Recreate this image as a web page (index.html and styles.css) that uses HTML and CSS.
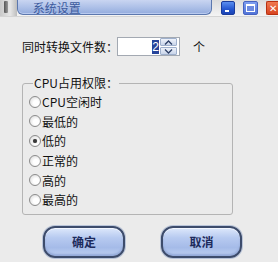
FILE: index.html
```html
<!DOCTYPE html>
<html lang="zh">
<head>
<meta charset="utf-8">
<title>系统设置</title>
<link rel="stylesheet" href="styles.css">
</head>
<body>
<div class="window">
  <div class="titlebar">
    <div class="sysicon"><span class="sysbar"></span></div>
    <div class="titlepill"><span class="title">系统设置</span></div>
    <div class="winbtns">
      <span class="wbtn min"><span class="min-bar"></span></span>
      <span class="wbtn max"><span class="max-box"></span></span>
      <span class="wbtn close">✕</span>
    </div>
  </div>
  <div class="content">
    <div class="row-count">
      <label class="count-label">同时转换文件数：</label>
      <div class="spin">
        <span class="spin-val"><span class="sel">2</span></span>
        <span class="spin-btns">
          <span class="sbtn"><svg width="9" height="5" viewBox="0 0 9 5"><path d="M1 4.5 L4.5 1 L8 4.5" fill="none" stroke="#2d3f66" stroke-width="1.3"/></svg></span>
          <span class="sbtn"><svg width="9" height="5" viewBox="0 0 9 5"><path d="M1 0.5 L4.5 4 L8 0.5" fill="none" stroke="#2d3f66" stroke-width="1.3"/></svg></span>
        </span>
      </div>
      <span class="unit">个</span>
    </div>
    <fieldset class="group">
      <legend>CPU占用权限：</legend>
      <label class="radio"><span class="dot"></span><span>CPU空闲时</span></label>
      <label class="radio"><span class="dot"></span><span>最低的</span></label>
      <label class="radio"><span class="dot checked"></span><span>低的</span></label>
      <label class="radio"><span class="dot"></span><span>正常的</span></label>
      <label class="radio"><span class="dot"></span><span>高的</span></label>
      <label class="radio"><span class="dot"></span><span>最高的</span></label>
    </fieldset>
    <div class="buttons">
      <button class="pill ok">确定</button>
      <button class="pill cancel">取消</button>
    </div>
  </div>
</div>
</body>
</html>
```

FILE: styles.css
```css
* { box-sizing: border-box; }
html, body { margin: 0; padding: 0; }
body {
  width: 278px;
  height: 262px;
  overflow: hidden;
  background: #ebebeb;
  font-family: "Noto Sans CJK SC", "Noto Sans", sans-serif;
  font-size: 12px;
  color: #111;
}
.window { width: 278px; height: 262px; }

.titlebar {
  height: 17px;
  display: flex;
  align-items: flex-start;
  background: linear-gradient(#dcdcdc, #f4f4f4);
  border-bottom: 1px solid #d4d4d4;
}
.sysicon {
  width: 17px;
  height: 16px;
  display: flex;
  justify-content: center;
  background: linear-gradient(90deg, #c8c8c8, #e6e6e6 60%, #bdbdbd);
}
.sysbar {
  width: 4px;
  height: 12px;
  margin-top: 1px;
  margin-right: 5px;
  background: linear-gradient(90deg, #555, #999);
  border-radius: 1px;
}
.titlepill {
  width: 198px;
  height: 15px;
  border: 1px solid #5c78ae;
  border-top: none;
  border-radius: 0 0 6px 6px;
  background: linear-gradient(#c9d5f1, #a9bde6 60%, #93abdd);
  box-shadow: inset 0 -1px 0 #b9caef;
  overflow: hidden;
}
.title {
  display: block;
  padding-left: 15px;
  padding-top: 1px;
  line-height: 13px;
  font-size: 12px;
  color: #3d5b9e;
}
.winbtns {
  display: flex;
  gap: 8px;
  margin-left: 9px;
  margin-top: 1px;
}
.wbtn {
  width: 14px;
  height: 14px;
  border-radius: 2px;
  position: relative;
}
.min {
  background: linear-gradient(#5a8ef0, #2456d0 60%, #1c44b4);
  border: 1px solid #1a3c9c;
}
.min-bar {
  position: absolute;
  left: 3px;
  bottom: 2px;
  width: 4px;
  height: 2px;
  background: #fff;
}
.max {
  width: 15px;
  background: linear-gradient(#7e9ef0, #5274d8);
  border: 1px solid #4662c0;
}
.max-box {
  position: absolute;
  left: 2px;
  top: 2px;
  width: 9px;
  height: 8px;
  border: 1px solid #fff;
  border-top-width: 2px;
  background: #6d8ae0;
}
.close {
  width: 12px;
  background: linear-gradient(#f07a50, #d84420);
  border: 1px solid #b83010;
  border-right: none;
  border-radius: 2px 0 0 2px;
  color: #fff;
  font-size: 10px;
  line-height: 12px;
  padding-left: 2px;
  overflow: hidden;
}

.content { padding-left: 22px; }

.row-count {
  display: flex;
  align-items: center;
  height: 19px;
  margin-top: 20px;
}
.count-label {
  width: 95px;
  white-space: nowrap;
  line-height: 19px;
}
.spin {
  width: 63px;
  height: 19px;
  border: 1px solid #a3a9b2;
  background: #fff;
  display: flex;
  align-items: center;
  padding-right: 2px;
}
.spin-val {
  flex: 1;
  display: flex;
  justify-content: flex-end;
  padding-right: 1px;
}
.sel {
  display: block;
  width: 7px;
  height: 14px;
  line-height: 14px;
  background: #27449a;
  color: #fff;
  font-family: "Liberation Sans", sans-serif;
  font-size: 12px;
  text-align: center;
}
.spin-btns {
  width: 17px;
  display: flex;
  flex-direction: column;
  gap: 1px;
}
.sbtn {
  height: 8px;
  border: 1px solid #9fb0cc;
  border-radius: 1px;
  background: linear-gradient(#eef2fa, #c9d5ea);
  display: flex;
  align-items: center;
  justify-content: center;
}
.sbtn svg { display: block; }
.unit {
  margin-left: 13px;
  line-height: 19px;
}

.group {
  margin: 19px 45px 0 0;
  padding: 1px 0 4px 6px;
  border: 1px solid #b4b4b4;
  border-radius: 3px;
  min-width: 0;
}
.group legend {
  padding: 0 1px;
  margin-left: 4px;
  line-height: 16px;
}
.radio {
  display: flex;
  align-items: center;
  height: 19.6px;
  white-space: nowrap;
}
.dot {
  width: 12px;
  height: 12px;
  border-radius: 50%;
  border: 1px solid #8c8c8c;
  background: radial-gradient(circle at 60% 60%, #ffffff 30%, #e2e2e2 75%, #cfcfcf);
  margin-right: 1px;
  display: flex;
  align-items: center;
  justify-content: center;
  flex: none;
}
.dot.checked::after {
  content: "";
  width: 4px;
  height: 4px;
  border-radius: 50%;
  background: #3a3a3a;
  box-shadow: 0 0 1px #666;
}

.buttons {
  display: flex;
  gap: 36px;
  margin-top: 11px;
  padding-left: 21px;
}
.pill {
  width: 82px;
  height: 32px;
  border: 2px solid #3d4c6c;
  border-radius: 12px;
  background: linear-gradient(#dde8fb, #b7caf0 35%, #a5bbe8 70%, #bfd0f2);
  box-shadow: inset 0 1px 0 #f2f6ff, inset 0 -2px 2px #93a9d8, 0 0 0 1px #b9c4d8;
  font-family: "Noto Sans CJK SC", sans-serif;
  font-size: 12px;
  font-weight: bold;
  color: #1d2b5c;
  padding: 0;
  line-height: 28px;
}
.cancel { width: 81px; }
```
